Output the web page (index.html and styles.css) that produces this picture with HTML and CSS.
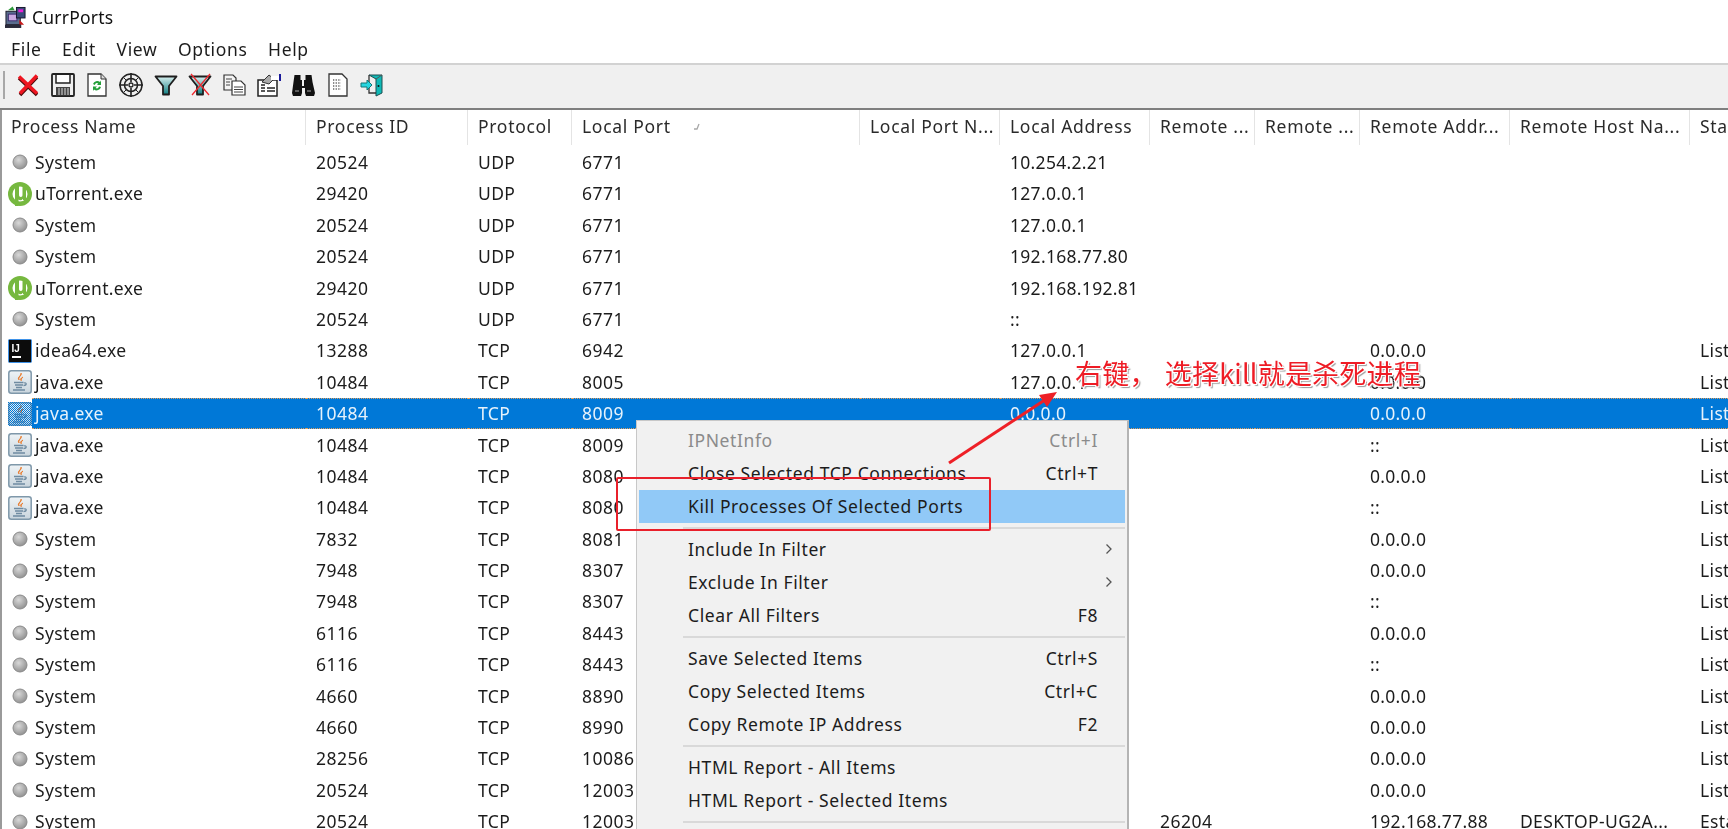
FILE: index.html
```html
<!DOCTYPE html>
<html lang="en">
<head>
<meta charset="utf-8">
<title>CurrPorts</title>
<link rel="stylesheet" href="styles.css">
</head>
<body>
<svg class="defs" width="0" height="0" aria-hidden="true">
  <defs>
    <pattern id="dither" width="2" height="2" patternUnits="userSpaceOnUse">
      <rect width="1" height="1" fill="#0078d7"/>
      <rect x="1" y="1" width="1" height="1" fill="#0078d7"/>
    </pattern>
    <linearGradient id="javabg" x1="0" y1="0" x2="0" y2="1">
      <stop offset="0" stop-color="#eef3f6"/>
      <stop offset="1" stop-color="#c9d5dd"/>
    </linearGradient>
    <radialGradient id="dotbg" cx=".4" cy=".35" r=".7">
      <stop offset="0" stop-color="#d8d8d8"/>
      <stop offset="1" stop-color="#8e8e8e"/>
    </radialGradient>
    <linearGradient id="funnel" x1="0" y1="0" x2="0" y2="1">
      <stop offset="0" stop-color="#d9f0f0"/>
      <stop offset="1" stop-color="#0d7d80"/>
    </linearGradient>
    <symbol id="sys" viewBox="0 0 24 24">
      <circle cx="12" cy="12" r="7" fill="url(#dotbg)" stroke="#8a8a8a"/>
    </symbol>
    <symbol id="utorrent" viewBox="0 0 24 24">
      <circle cx="12" cy="12" r="12" fill="#76b83f"/>
      <circle cx="12" cy="12" r="7.500" fill="#fff"/>
      <path d="M7 4h4v8.500c0 1.800.7 2.500 1.800 2.500s1.700-.7 1.700-2.500V4h3.500v14h-3v-1.300c-.8 1-1.700 1.500-2.700 1.500-.8 0-1.400-.2-1.800-.6V24H7z" fill="#76b83f"/>
    </symbol>
    <symbol id="idea" viewBox="0 0 24 24">
      <rect x=".5" y=".5" width="23" height="23" rx="1" fill="#0c0c0c" stroke="#3f92e8"/>
      <text x="3.500" y="12.500" class="idea-t">IJ</text>
      <rect x="4" y="17" width="9" height="2" fill="#fff"/>
    </symbol>
    <symbol id="java" viewBox="0 0 24 24">
      <rect x=".8" y=".8" width="22.400" height="22.400" rx="2.500" fill="url(#javabg)" stroke="#7f98aa" stroke-width="1.500"/>
      <path d="M13 3c1.500 2.500-3.500 4-1.800 7 -2.800-2.500 2.300-4 1.800-7zM15 7c-2 1-3 2-1.800 3.800-.2-1.600.6-2.600 1.800-3.800z" fill="#e8701a" stroke="#e8701a" stroke-width=".7"/>
      <path d="M6 12.500h9.500M7 15h8M8 17.500h6M5 20h12M16 13c3-1 3 2.500-.5 2.500" fill="none" stroke="#6f8ba1" stroke-width="1.300"/>
    </symbol>
  </defs>
</svg>

<div class="app">
  <header class="titlebar">
    <svg class="appicon" viewBox="0 0 22 24">
      <rect x="1" y="6" width="15" height="14" fill="#5a6d8e" stroke="#1a1a2a"/>
      <rect x="3.500" y="9" width="9" height="7" fill="#c9a8e0" stroke="#3c2a70"/>
      <rect x="12" y="2" width="9" height="11" fill="#3a4a7a" stroke="#14142a"/>
      <rect x="14" y="4" width="5" height="3" fill="#e820d8"/>
      <path d="M3 5 8 1l2 4z" fill="#2e9a3a"/>
      <path d="M15 15l5 5h-5z" fill="#c81818"/>
      <rect x="0" y="20" width="17" height="3.500" fill="#2a2a3a"/>
    </svg>
    <span class="apptitle">CurrPorts</span>
  </header>

  <nav class="menubar">
    <span>File</span><span>Edit</span><span>View</span><span>Options</span><span>Help</span>
  </nav>

  <div class="toolbar">
    <span class="grip"></span>
    <span class="tool"><svg viewBox="0 0 24 24"><path d="M3 5 21 22M21 4 4 22" stroke="#4a0a0a" stroke-width="3.500" fill="none"/><path d="M3 3.500 21 20.500M21 2.500 4 20.500" stroke="#ee1520" stroke-width="3.500" fill="none"/></svg></span>
    <span class="tool"><svg viewBox="0 0 24 24"><rect x="1" y="1" width="22" height="22" rx="1" fill="#efefef" stroke="#222" stroke-width="1.800"/><path d="M5 2v8h14V2" fill="#fff" stroke="#222" stroke-width="1.500"/><rect x="5" y="14" width="14" height="8.500" fill="#444"/><path d="M8 15v7M11 15v7M14 15v7M17 15v7" stroke="#ddd" stroke-width="1"/></svg></span>
    <span class="tool"><svg viewBox="0 0 24 24"><path d="M3 1h13l5 5v17H3z" fill="#fff" stroke="#333" stroke-width="1.300"/><path d="M16 1v5h5" fill="#ddd" stroke="#333"/><path d="M8 11a4.500 4.500 0 0 1 7-2l1-1.500V12h-4l1.300-1.500a2.500 2.500 0 0 0-3.500 1.500zM16 14a4.500 4.500 0 0 1-7 2.500L8 18v-4.500h4l-1.500 1.500a2.500 2.500 0 0 0 3.500-1.500z" fill="#25a03a"/></svg></span>
    <span class="tool"><svg viewBox="0 0 24 24" fill="none" stroke="#222"><circle cx="12" cy="12" r="11" stroke-width="1.500"/><circle cx="12" cy="12" r="6.500" stroke-width="1.500"/><circle cx="12" cy="12" r="2" stroke-width="1.300"/><path d="M12 0v9M12 15v9M0 12h9M15 12h9" stroke-width="1.600"/><path d="M5 5l2.500 2.500M19 5l-2.500 2.500M5 19l2.500-2.500M19 19l-2.500-2.500" stroke-width="1"/></svg></span>
    <span class="tool"><svg viewBox="0 0 24 24"><path d="M1.500 3.500h21L15 13v8.500H9V13z" fill="url(#funnel)" stroke="#1e1e1e" stroke-width="1.800" stroke-linejoin="round"/></svg></span>
    <span class="tool"><svg viewBox="0 0 24 24"><path d="M1.500 3.500h21L15 13v8.500H9V13z" fill="url(#funnel)" stroke="#1e1e1e" stroke-width="1.800" stroke-linejoin="round"/><path d="M3 1 21 22M22 1 4 22" stroke="#ee2a30" stroke-width="1.300"/></svg></span>
    <span class="tool"><svg viewBox="0 0 24 24"><path d="M1 2h9l3 3v12H1z" fill="#f4f4f4" stroke="#333" stroke-width="1.200"/><path d="M9 8h9l4 4v10H9z" fill="#fff" stroke="#333" stroke-width="1.200"/><path d="M3 6h6M3 9h4M3 12h4M11 14h9M11 16.500h9M11 19h9" stroke="#444"/></svg></span>
    <span class="tool"><svg viewBox="0 0 24 24"><rect x="1" y="7" width="19" height="16" fill="#fff" stroke="#222" stroke-width="1.500"/><path d="M4 12h4M4 15h4M4 18h4M10 15h8M10 18h8" stroke="#222" stroke-width="1.300"/><path d="M5 9 12 2l5 4-5 5z" fill="#aaa" stroke="#333"/><path d="M14 3h8v4h-8z" fill="#fff"/><path d="M23 1v7" stroke="#1a1a9a" stroke-width="2"/></svg></span>
    <span class="tool"><svg viewBox="0 0 24 24" fill="#111"><path d="M3.500 2h6v5h1.500v6h2V7h1.500V2h6l1 7 2.500 11-1 3h-8l-1-3v-5h-3v5l-1 3H2l-1-3 1.500-11z"/><path d="M4 18h4M16 18h4" stroke="#777" stroke-width="1.500"/></svg></span>
    <span class="tool"><svg viewBox="0 0 24 24"><path d="M3 1h13l5 5v17H3z" fill="#fff" stroke="#333" stroke-width="1.300"/><path d="M7 7h8M7 10h8M7 13h8M7 16h8" stroke="#666" stroke-width="1.300" stroke-dasharray="1.300 1.300"/></svg></span>
    <span class="tool"><svg viewBox="0 0 24 24"><path d="M9 2h13v18l-6 3V6z" fill="#0fb9b6" stroke="#1f4f50"/><path d="M16 6 22 2" stroke="#555"/><path d="M9 2v7M9 15v5h7" fill="none" stroke="#333" stroke-width="1.300"/><path d="M1 10h6V7l5 5-5 5v-3H1z" fill="#25d6e0" stroke="#177"/><circle cx="18.500" cy="13" r="1" fill="#111"/></svg></span>
  </div>

  <main class="list">
    <div class="grid head">
      <span class="hcell hname">Process Name</span>
      <span class="hcell">Process ID</span>
      <span class="hcell">Protocol</span>
      <span class="hcell">Local Port<svg class="sort" viewBox="0 0 10 10"><path d="M3 8h3L8 3" fill="none" stroke="#a8a8a8" stroke-width="1.300"/></svg></span>
      <span class="hcell">Local Port N...</span>
      <span class="hcell">Local Address</span>
      <span class="hcell">Remote ...</span>
      <span class="hcell">Remote ...</span>
      <span class="hcell">Remote Addr...</span>
      <span class="hcell">Remote Host Na...</span>
      <span class="hcell hlast">State</span>
    </div>

    <div class="grid row"><span class="ico"><svg><use href="#sys"/></svg></span><span class="cell name">System</span><span class="cell">20524</span><span class="cell">UDP</span><span class="cell">6771</span><span class="cell"></span><span class="cell">10.254.2.21</span></div>
    <div class="grid row"><span class="ico"><svg><use href="#utorrent"/></svg></span><span class="cell name">uTorrent.exe</span><span class="cell">29420</span><span class="cell">UDP</span><span class="cell">6771</span><span class="cell"></span><span class="cell">127.0.0.1</span></div>
    <div class="grid row"><span class="ico"><svg><use href="#sys"/></svg></span><span class="cell name">System</span><span class="cell">20524</span><span class="cell">UDP</span><span class="cell">6771</span><span class="cell"></span><span class="cell">127.0.0.1</span></div>
    <div class="grid row"><span class="ico"><svg><use href="#sys"/></svg></span><span class="cell name">System</span><span class="cell">20524</span><span class="cell">UDP</span><span class="cell">6771</span><span class="cell"></span><span class="cell">192.168.77.80</span></div>
    <div class="grid row"><span class="ico"><svg><use href="#utorrent"/></svg></span><span class="cell name">uTorrent.exe</span><span class="cell">29420</span><span class="cell">UDP</span><span class="cell">6771</span><span class="cell"></span><span class="cell">192.168.192.81</span></div>
    <div class="grid row"><span class="ico"><svg><use href="#sys"/></svg></span><span class="cell name">System</span><span class="cell">20524</span><span class="cell">UDP</span><span class="cell">6771</span><span class="cell"></span><span class="cell">::</span></div>
    <div class="grid row"><span class="ico"><svg><use href="#idea"/></svg></span><span class="cell name">idea64.exe</span><span class="cell">13288</span><span class="cell">TCP</span><span class="cell">6942</span><span class="cell"></span><span class="cell">127.0.0.1</span><span class="cell"></span><span class="cell"></span><span class="cell">0.0.0.0</span><span class="cell"></span><span class="cell">Listening</span></div>
    <div class="grid row"><span class="ico"><svg><use href="#java"/></svg></span><span class="cell name">java.exe</span><span class="cell">10484</span><span class="cell">TCP</span><span class="cell">8005</span><span class="cell"></span><span class="cell">127.0.0.1</span><span class="cell"></span><span class="cell"></span><span class="cell">0.0.0.0</span><span class="cell"></span><span class="cell">Listening</span></div>
    <div class="grid row sel"><span class="ico"><svg><use href="#java"/></svg><svg class="dither" viewBox="0 0 24 24"><rect width="24" height="24" fill="url(#dither)"/></svg></span><span class="cell name">java.exe</span><span class="cell">10484</span><span class="cell">TCP</span><span class="cell">8009</span><span class="cell"></span><span class="cell">0.0.0.0</span><span class="cell"></span><span class="cell"></span><span class="cell">0.0.0.0</span><span class="cell"></span><span class="cell">Listening</span></div>
    <div class="grid row"><span class="ico"><svg><use href="#java"/></svg></span><span class="cell name">java.exe</span><span class="cell">10484</span><span class="cell">TCP</span><span class="cell">8009</span><span class="cell"></span><span class="cell">::</span><span class="cell"></span><span class="cell"></span><span class="cell">::</span><span class="cell"></span><span class="cell">Listening</span></div>
    <div class="grid row"><span class="ico"><svg><use href="#java"/></svg></span><span class="cell name">java.exe</span><span class="cell">10484</span><span class="cell">TCP</span><span class="cell">8080</span><span class="cell"></span><span class="cell">0.0.0.0</span><span class="cell"></span><span class="cell"></span><span class="cell">0.0.0.0</span><span class="cell"></span><span class="cell">Listening</span></div>
    <div class="grid row"><span class="ico"><svg><use href="#java"/></svg></span><span class="cell name">java.exe</span><span class="cell">10484</span><span class="cell">TCP</span><span class="cell">8080</span><span class="cell"></span><span class="cell">::</span><span class="cell"></span><span class="cell"></span><span class="cell">::</span><span class="cell"></span><span class="cell">Listening</span></div>
    <div class="grid row"><span class="ico"><svg><use href="#sys"/></svg></span><span class="cell name">System</span><span class="cell">7832</span><span class="cell">TCP</span><span class="cell">8081</span><span class="cell"></span><span class="cell">0.0.0.0</span><span class="cell"></span><span class="cell"></span><span class="cell">0.0.0.0</span><span class="cell"></span><span class="cell">Listening</span></div>
    <div class="grid row"><span class="ico"><svg><use href="#sys"/></svg></span><span class="cell name">System</span><span class="cell">7948</span><span class="cell">TCP</span><span class="cell">8307</span><span class="cell"></span><span class="cell">0.0.0.0</span><span class="cell"></span><span class="cell"></span><span class="cell">0.0.0.0</span><span class="cell"></span><span class="cell">Listening</span></div>
    <div class="grid row"><span class="ico"><svg><use href="#sys"/></svg></span><span class="cell name">System</span><span class="cell">7948</span><span class="cell">TCP</span><span class="cell">8307</span><span class="cell"></span><span class="cell">::</span><span class="cell"></span><span class="cell"></span><span class="cell">::</span><span class="cell"></span><span class="cell">Listening</span></div>
    <div class="grid row"><span class="ico"><svg><use href="#sys"/></svg></span><span class="cell name">System</span><span class="cell">6116</span><span class="cell">TCP</span><span class="cell">8443</span><span class="cell"></span><span class="cell">0.0.0.0</span><span class="cell"></span><span class="cell"></span><span class="cell">0.0.0.0</span><span class="cell"></span><span class="cell">Listening</span></div>
    <div class="grid row"><span class="ico"><svg><use href="#sys"/></svg></span><span class="cell name">System</span><span class="cell">6116</span><span class="cell">TCP</span><span class="cell">8443</span><span class="cell"></span><span class="cell">::</span><span class="cell"></span><span class="cell"></span><span class="cell">::</span><span class="cell"></span><span class="cell">Listening</span></div>
    <div class="grid row"><span class="ico"><svg><use href="#sys"/></svg></span><span class="cell name">System</span><span class="cell">4660</span><span class="cell">TCP</span><span class="cell">8890</span><span class="cell"></span><span class="cell">0.0.0.0</span><span class="cell"></span><span class="cell"></span><span class="cell">0.0.0.0</span><span class="cell"></span><span class="cell">Listening</span></div>
    <div class="grid row"><span class="ico"><svg><use href="#sys"/></svg></span><span class="cell name">System</span><span class="cell">4660</span><span class="cell">TCP</span><span class="cell">8990</span><span class="cell"></span><span class="cell">0.0.0.0</span><span class="cell"></span><span class="cell"></span><span class="cell">0.0.0.0</span><span class="cell"></span><span class="cell">Listening</span></div>
    <div class="grid row"><span class="ico"><svg><use href="#sys"/></svg></span><span class="cell name">System</span><span class="cell">28256</span><span class="cell">TCP</span><span class="cell">10086</span><span class="cell"></span><span class="cell">0.0.0.0</span><span class="cell"></span><span class="cell"></span><span class="cell">0.0.0.0</span><span class="cell"></span><span class="cell">Listening</span></div>
    <div class="grid row"><span class="ico"><svg><use href="#sys"/></svg></span><span class="cell name">System</span><span class="cell">20524</span><span class="cell">TCP</span><span class="cell">12003</span><span class="cell"></span><span class="cell">0.0.0.0</span><span class="cell"></span><span class="cell"></span><span class="cell">0.0.0.0</span><span class="cell"></span><span class="cell">Listening</span></div>
    <div class="grid row"><span class="ico"><svg><use href="#sys"/></svg></span><span class="cell name">System</span><span class="cell">20524</span><span class="cell">TCP</span><span class="cell">12003</span><span class="cell"></span><span class="cell">192.168.77.88</span><span class="cell">26204</span><span class="cell"></span><span class="cell">192.168.77.88</span><span class="cell">DESKTOP-UG2A...</span><span class="cell">Established</span></div>
  </main>

  <div class="ctx">
    <div class="mi off"><span>IPNetInfo</span><span>Ctrl+I</span></div>
    <div class="mi"><span>Close Selected TCP Connections</span><span>Ctrl+T</span></div>
    <div class="mi hot"><span>Kill Processes Of Selected Ports</span></div>
    <div class="msep"></div>
    <div class="mi"><span>Include In Filter</span><svg class="chev" viewBox="0 0 8 12"><path d="M1.500 1.500 6 6l-4.500 4.500" fill="none" stroke="#555" stroke-width="1.300"/></svg></div>
    <div class="mi"><span>Exclude In Filter</span><svg class="chev" viewBox="0 0 8 12"><path d="M1.500 1.500 6 6l-4.500 4.500" fill="none" stroke="#555" stroke-width="1.300"/></svg></div>
    <div class="mi"><span>Clear All Filters</span><span>F8</span></div>
    <div class="msep"></div>
    <div class="mi"><span>Save Selected Items</span><span>Ctrl+S</span></div>
    <div class="mi"><span>Copy Selected Items</span><span>Ctrl+C</span></div>
    <div class="mi"><span>Copy Remote IP Address</span><span>F2</span></div>
    <div class="msep"></div>
    <div class="mi"><span>HTML Report - All Items</span></div>
    <div class="mi"><span>HTML Report - Selected Items</span></div>
    <div class="msep"></div>
  </div>

  <div class="redbox"></div>
  <svg class="arrow" viewBox="0 0 140 90"><path d="M3 77 98 14.500" stroke="#ee2027" stroke-width="3" fill="none"/><path d="M111 6 93 9 101 21z" fill="#ee2027"/></svg>
  <div class="note">右键， 选择kill就是杀死进程</div>
</div>
</body>
</html>
```

FILE: styles.css
```css
* { box-sizing: border-box; }

html, body {
  margin: 0;
  height: 829px;
  overflow: hidden;
  background: #fff;
}

body {
  font-family: "Noto Sans", "Open Sans", "Liberation Sans", sans-serif;
  font-size: 17.5px;
  color: #1c1c1c;
}

.defs { position: absolute; }

.idea-t {
  font-family: "Liberation Sans", sans-serif;
  font-weight: 700;
  font-size: 10px;
  fill: #fff;
}

.app {
  height: 829px;
  overflow: hidden;
  position: relative;
  display: flex;
  flex-direction: column;
  filter: blur(.35px);
}

.titlebar {
  height: 33px;
  display: flex;
  align-items: center;
  padding-left: 5px;
  gap: 6px;
}

.appicon { width: 21px; height: 24px; }
.apptitle { font-size: 17.5px; letter-spacing: .2px; color: #111; }

.menubar {
  height: 30px;
  display: flex;
  align-items: center;
  gap: 20.5px;
  padding: 1px 0 0 11px;
  letter-spacing: .65px;
}

.toolbar {
  height: 47px;
  flex: none;
  background: #f0f0f0;
  border-top: 2px solid #d2d2d2;
  border-bottom: 2px solid #7f7f7f;
  display: flex;
  align-items: center;
  padding: 0 0 3px 3px;
}

.grip {
  width: 2px;
  height: 28px;
  background: #a8a8a8;
  margin-right: 6px;
}

.tool {
  width: 34.4px;
  height: 24px;
  display: flex;
  justify-content: center;
}

.tool svg { width: 24px; height: 24px; }

.list {
  flex: 1;
  border-left: 2px solid #9a9a9a;
  min-height: 0;
  overflow: hidden;
}

.grid {
  display: grid;
  grid-template-columns: 30px 274px 162px 104px 288px 140px 150px 105px 105px 150px 180px 1fr;
}

.head { height: 36.8px; padding-bottom: 2px; }

.hcell {
  display: flex;
  align-items: center;
  padding: 0 0 2px 10px;
  border-right: 1px solid #e4e4e4;
  white-space: nowrap;
  overflow: hidden;
  color: #2a2a2a;
  letter-spacing: .7px;
}

.hname { grid-column: span 2; padding-left: 9px; }
.hlast { border-right: 0; }

.sort { width: 10px; height: 10px; margin-left: 20px; }

.row { height: 31.4px; }

.ico {
  position: relative;
  display: flex;
  align-items: center;
  justify-content: flex-end;
  overflow: visible;
}

.ico svg { width: 24px; height: 24px; flex: none; }

.ico .dither {
  position: absolute;
  right: 0;
  top: 3.7px;
}

.cell {
  display: flex;
  align-items: center;
  padding: 0 0 1px 10px;
  white-space: nowrap;
  overflow: hidden;
  min-width: 0;
  letter-spacing: .35px;
}

/* Process ID and Local Port hold plain digits; the address columns are set a little tighter. */
.cell:nth-child(3),
.cell:nth-child(5),
.cell:nth-child(8) { letter-spacing: .5px; }

.cell:nth-child(7),
.cell:nth-child(10) { letter-spacing: .3px; }

.cell.name { padding-left: 3px; }

.sel .cell {
  background: #0078d7;
  color: #e6f2fb;
  border-top: 1px dotted #e0a060;
  border-bottom: 1px dotted #e0a060;
}

.ctx {
  position: absolute;
  left: 636px;
  top: 420px;
  width: 493px;
  height: 420px;
  background: #f1f1f1;
  border: 1px solid #c8c8c8;
  border-right: 2px solid #b4b4b4;
  padding: 2.5px 2px 0;
  letter-spacing: .6px;
}

.mi {
  height: 33px;
  display: flex;
  align-items: center;
  justify-content: space-between;
  padding: 0 27px 1px 49px;
}

.mi.off { color: #8b8b8b; }
.mi.hot { background: #91c9f7; }

.chev { width: 8px; height: 12px; margin-right: -15px; }

.msep {
  height: 2px;
  margin: 4px 0 4px 44px;
  background: #d9d9d9;
}

.redbox {
  position: absolute;
  left: 616px;
  top: 477px;
  width: 375px;
  height: 54px;
  border: 2px solid #e9202b;
  border-radius: 2px;
}

.arrow {
  position: absolute;
  left: 946px;
  top: 386px;
  width: 140px;
  height: 90px;
}

.note {
  position: absolute;
  left: 1075px;
  top: 354px;
  font-family: "Noto Sans CJK SC", sans-serif;
  font-size: 27px;
  line-height: 38px;
  word-spacing: 2px;
  letter-spacing: .2px;
  color: #ee1c25;
  white-space: pre;
  text-shadow: 1px 1px 0 #fff, -1px -1px 0 #fff, 1px -1px 0 #fff, -1px 1px 0 #fff, 2px 2px 1px #999;
}
```
